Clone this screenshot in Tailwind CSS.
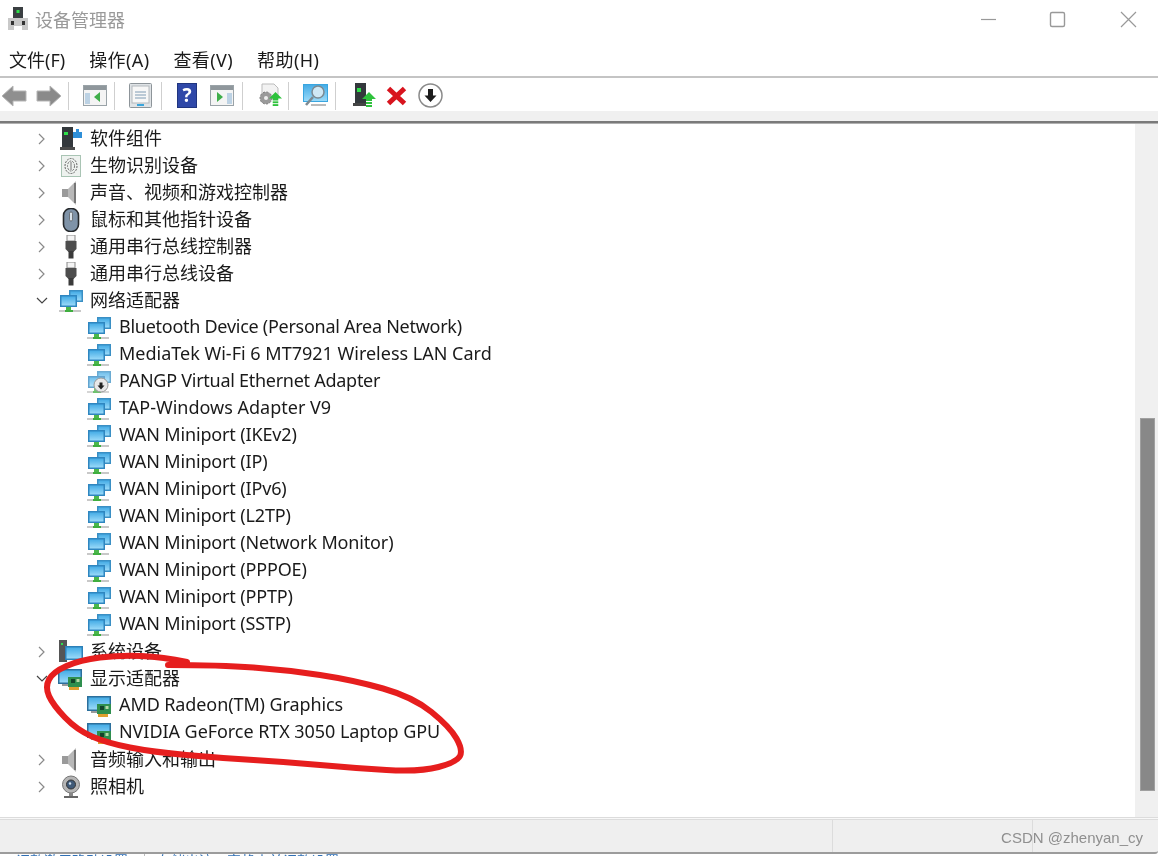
<!DOCTYPE html>
<html lang="zh-CN">
<head>
  <meta charset="UTF-8" />
  <title>设备管理器</title>
  <script src="https://cdn.jsdelivr.net/npm/@tailwindcss/browser@4"></script>
</head>
<body class="bg-white">
  <!-- icon set -->
  <svg class="absolute w-0 h-0">
    <defs>
      <linearGradient id="blue" x1="0" y1="0" x2="0" y2="1"><stop offset="0" stop-color="#45ace6"/><stop offset="1" stop-color="#9adaf9"/></linearGradient>
      <symbol id="net" viewBox="0 0 24 24">
        <rect x="10" y="1" width="14" height="12" fill="#3a8fc4"/><rect x="11.500" y="2.500" width="11" height="9" fill="url(#blue)"/>
        <rect x="1" y="6" width="17" height="12" fill="#2f86c0"/><rect x="2.500" y="7.500" width="14" height="9" fill="url(#blue)"/>
        <rect x="7" y="18" width="5" height="3" fill="#4cb84c"/><rect x="0" y="21" width="22" height="2" fill="#c8c8c8"/><rect x="6" y="21" width="8" height="2" fill="#3fae3f"/>
      </symbol>
      <symbol id="gpu" viewBox="0 0 24 24">
        <rect x="0" y="2" width="24" height="15" fill="#2c6f9c"/><rect x="1.5" y="3.5" width="21" height="12" fill="url(#blue)"/>
        <rect x="4" y="17" width="9" height="2" fill="#9a9a9a"/>
        <rect x="10" y="10" width="14" height="10" fill="#2f8f4e"/><rect x="13" y="12" width="4" height="4" fill="#14452a"/><rect x="18.5" y="12" width="3" height="3" fill="#b6d9a6"/>
        <rect x="11" y="20" width="10" height="3" fill="#e0a030"/>
      </symbol>
      <symbol id="tower" viewBox="0 0 24 24">
        <rect x="3" y="0" width="11" height="20" fill="#33383c"/><rect x="5" y="5" width="4" height="3" fill="#2ee04a"/>
        <rect x="1" y="20" width="15" height="3" fill="#4a4a4a"/>
      </symbol>
      <symbol id="speaker" viewBox="0 0 24 24">
        <path d="M3 8h6v8H3z" fill="#9a9a9a"/><path d="M9 8 17 0v24l-8-8z" fill="#b8b8b8"/><path d="M15 2h2v20h-2z" fill="#777"/>
      </symbol>
      <symbol id="usb" viewBox="0 0 24 24">
        <rect x="8" y="0" width="8" height="6" fill="#f4f4f4" stroke="#888"/><path d="M6.500 6h11v8l-3 3h-5l-3-3z" fill="#4d4d4d"/><rect x="9.500" y="16" width="5" height="7.500" fill="#3a3a3a"/>
      </symbol>
      <symbol id="arrowup" viewBox="0 0 14 16">
        <path d="M7 0 14 7H10V9H4V7H0z" fill="#2ec23c"/><rect x="4" y="10" width="6" height="2" fill="#2ec23c"/><rect x="4" y="13" width="6" height="2" fill="#2ec23c"/>
      </symbol>
    </defs>
  </svg>

  <div class="relative w-[1158px] h-[856px] overflow-hidden bg-white font-['Noto_Sans','Noto_Sans_CJK_SC',sans-serif] text-[18px] leading-[27px] text-[#1a1a1a] flex flex-col blur-[0.3px]">

    <!-- Title bar -->
    <header class="h-[44px] shrink-0 flex items-start">
      <svg class="w-[22px] h-[24px] ml-[7px] mt-[7px]" viewBox="0 0 22 24">
        <rect x="6" y="0" width="10" height="12" fill="#3a3f42"/><rect x="9.5" y="3" width="3" height="3" fill="#2ee04a"/>
        <path d="M1 11h20v12H1z" fill="#c9c9c9"/><rect x="4" y="14" width="3" height="4" fill="#333"/><rect x="15" y="14" width="3" height="4" fill="#333"/><rect x="7" y="19" width="8" height="4" fill="#fff"/>
      </svg>
      <h1 class="ml-[6px] mt-[7px] text-[#9a9a9a] text-[18px]">设备管理器</h1>
      <div class="ml-auto relative">
        <svg class="w-[178px] h-[44px] block" viewBox="0 0 178 44" fill="none" stroke="#999">
          <path d="M1 19.5h15" stroke-width="1.2"/>
          <rect x="70.5" y="12.5" width="14" height="14" rx="1.5" stroke-width="1.4"/>
          <path d="M141 12l15 15M156 12l-15 15" stroke-width="1.2"/>
        </svg>
      </div>
    </header>

    <!-- Menu bar -->
    <nav class="h-[32px] shrink-0 flex items-center pl-[9px] gap-[24px] border-b-2 border-[#c4c4c4] box-content">
      <span>文件(F)</span><span class="tracking-[0.4px]">操作(A)</span><span class="tracking-[0.4px]">查看(V)</span><span class="tracking-[0.4px]">帮助(H)</span>
    </nav>

    <!-- Toolbar -->
    <div class="h-[33px] shrink-0 flex items-center pl-[1px] pt-[2px]">
      <svg class="w-[26px] h-[22px]" viewBox="0 0 26 22"><path d="M1 11 12 1v5h13v10H12v5z" fill="#8f8f8f" stroke="#b5b5b5"/></svg>
      <svg class="w-[26px] h-[22px] ml-[9px]" viewBox="0 0 26 22"><path d="M25 11 14 1v5H1v10h13v5z" fill="#8a8a8a" stroke="#b5b5b5"/></svg>
      <div class="w-px h-[28px] bg-[#cfcfcf] ml-[6px]"></div>
      <svg class="w-[24px] h-[21px] ml-[14px]" viewBox="0 0 24 21"><rect x=".5" y=".5" width="23" height="20" fill="#f4f4f4" stroke="#9aa3a8"/><rect x="1" y="1" width="22" height="4" fill="#8f979c"/><rect x="2" y="8" width="5" height="11" fill="#bcd2e4"/><path d="M17 7v10l-6-5z" fill="#3fae4a"/></svg>
      <div class="w-px h-[28px] bg-[#cfcfcf] ml-[7px]"></div>
      <svg class="w-[23px] h-[25px] ml-[14px]" viewBox="0 0 23 25"><rect x=".5" y=".5" width="22" height="24" rx="1" fill="#dfe3e6" stroke="#8d9499"/><rect x="3" y="3" width="17" height="17" fill="#f7f7f7" stroke="#b4b9bd"/><path d="M6 9h11M6 12h11M6 15h11" stroke="#7f9bb4"/><rect x="8" y="21" width="7" height="2" fill="#3aa6dc"/></svg>
      <div class="w-px h-[28px] bg-[#cfcfcf] ml-[9px]"></div>
      <div class="w-[20px] h-[25px] ml-[15px] bg-[#2f48a8] border border-[#20357f] flex items-center justify-center text-white font-bold text-[19px] leading-none">?</div>
      <svg class="w-[24px] h-[21px] ml-[13px]" viewBox="0 0 24 21"><rect x=".5" y=".5" width="23" height="20" fill="#f4f4f4" stroke="#9aa3a8"/><rect x="1" y="1" width="22" height="4" fill="#8f979c"/><rect x="17" y="8" width="5" height="11" fill="#bcd2e4"/><path d="M7 7v10l6-5z" fill="#3fae4a"/></svg>
      <div class="w-px h-[28px] bg-[#cfcfcf] ml-[8px]"></div>
      <svg class="w-[25px] h-[25px] ml-[14px]" viewBox="0 0 25 25"><path d="M5 1h12l4 4v8H5z" fill="#f2f2f2" stroke="#bbb"/><circle cx="9" cy="15" r="6" fill="#9a9a9a" stroke="#777" stroke-dasharray="2 1.5"/><circle cx="9" cy="15" r="2" fill="#eee"/><g transform="translate(12 9)"><use href="#arrowup" width="13" height="15"/></g></svg>
      <div class="w-px h-[28px] bg-[#cfcfcf] ml-[6px]"></div>
      <svg class="w-[25px] h-[24px] ml-[14px]" viewBox="0 0 25 24"><rect x="0" y="0" width="25" height="18" fill="#3aa6e0"/><rect x="1" y="1" width="23" height="16" fill="url(#blue)"/><circle cx="15" cy="8" r="6" fill="#cfe8f5" stroke="#7c8a92" stroke-width="1.5"/><path d="M10 13 3 21" stroke="#7c8a92" stroke-width="2.5"/><rect x="8" y="20" width="15" height="2" fill="#bbb"/></svg>
      <div class="w-px h-[28px] bg-[#cfcfcf] ml-[7px]"></div>
      <svg class="w-[23px] h-[25px] ml-[17px]" viewBox="0 0 23 25"><rect x="2" y="0" width="11" height="20" fill="#33383c"/><rect x="4" y="5" width="4" height="4" fill="#2ee04a"/><rect x="0" y="20" width="13" height="3" fill="#444"/><g transform="translate(9 9)"><use href="#arrowup" width="14" height="16"/></g></svg>
      <svg class="w-[21px] h-[20px] ml-[10px]" viewBox="0 0 21 20"><path d="M2.5 2.5 18.5 17.5M18.5 2.5 2.5 17.5" stroke="#d8141e" stroke-width="5"/></svg>
      <svg class="w-[25px] h-[25px] ml-[11px]" viewBox="0 0 25 25"><circle cx="12.5" cy="12.5" r="11.5" fill="#fff" stroke="#8a8a8a" stroke-width="1.5"/><path d="M12.5 19 6.5 12.5h3.5V6h5v6.500h3.500z" fill="#1c1c1c"/></svg>
    </div>

    <div class="h-[10px] shrink-0 bg-[#f0f0f0]"></div>
    <div class="h-[3px] shrink-0 bg-[#7a7a7a] border-b border-[#b0b0b0]"></div>

    <!-- Tree + scrollbar -->
    <main class="flex-1 flex min-h-0">
      <div class="flex-1 pt-[1px] relative">
        <!-- category rows -->
        <div class="flex h-[27px] items-center"><svg class="w-[8px] h-[12px] ml-[38px]" viewBox="0 0 8 12" fill="none" stroke="#8a8a8a" stroke-width="1.2"><path d="M1 1l5 5-5 5"/></svg><svg class="w-[24px] h-[24px] ml-[13px]" viewBox="0 0 24 24"><use href="#tower"/><path d="M14 5h3V2h3v3h3v6h-9z" fill="#2e8fd8"/></svg><span class="ml-[7px]">软件组件</span></div>
        <div class="flex h-[27px] items-center"><svg class="w-[8px] h-[12px] ml-[38px]" viewBox="0 0 8 12" fill="none" stroke="#8a8a8a" stroke-width="1.2"><path d="M1 1l5 5-5 5"/></svg><svg class="w-[24px] h-[24px] ml-[13px]" viewBox="0 0 24 24" fill="none"><rect x="2.500" y="1.500" width="19" height="21" fill="#eef2ef" stroke="#a9c4b4"/><ellipse cx="12" cy="12" rx="6" ry="7.500" stroke="#666" stroke-dasharray="2 1"/><ellipse cx="12" cy="12" rx="3.500" ry="5" stroke="#777" stroke-dasharray="2 1"/><path d="M12 8v8" stroke="#777"/></svg><span class="ml-[7px]">生物识别设备</span></div>
        <div class="flex h-[27px] items-center"><svg class="w-[8px] h-[12px] ml-[38px]" viewBox="0 0 8 12" fill="none" stroke="#8a8a8a" stroke-width="1.2"><path d="M1 1l5 5-5 5"/></svg><svg class="w-[24px] h-[24px] ml-[13px]" viewBox="0 0 24 24"><use href="#speaker"/></svg><span class="ml-[7px]">声音、视频和游戏控制器</span></div>
        <div class="flex h-[27px] items-center"><svg class="w-[8px] h-[12px] ml-[38px]" viewBox="0 0 8 12" fill="none" stroke="#8a8a8a" stroke-width="1.2"><path d="M1 1l5 5-5 5"/></svg><svg class="w-[24px] h-[24px] ml-[13px]" viewBox="0 0 24 24"><rect x="4.500" y="0.500" width="15" height="23" rx="7" fill="#7f93a8" stroke="#26292c" stroke-width="1.600"/><rect x="10.500" y="4" width="3" height="9" rx="1.500" fill="#d9e2ea" stroke="#444" stroke-width=".6"/></svg><span class="ml-[7px]">鼠标和其他指针设备</span></div>
        <div class="flex h-[27px] items-center"><svg class="w-[8px] h-[12px] ml-[38px]" viewBox="0 0 8 12" fill="none" stroke="#8a8a8a" stroke-width="1.2"><path d="M1 1l5 5-5 5"/></svg><svg class="w-[24px] h-[24px] ml-[13px]" viewBox="0 0 24 24"><use href="#usb"/></svg><span class="ml-[7px]">通用串行总线控制器</span></div>
        <div class="flex h-[27px] items-center"><svg class="w-[8px] h-[12px] ml-[38px]" viewBox="0 0 8 12" fill="none" stroke="#8a8a8a" stroke-width="1.2"><path d="M1 1l5 5-5 5"/></svg><svg class="w-[24px] h-[24px] ml-[13px]" viewBox="0 0 24 24"><use href="#usb"/></svg><span class="ml-[7px]">通用串行总线设备</span></div>
        <div class="flex h-[27px] items-center"><svg class="w-[12px] h-[8px] ml-[36px]" viewBox="0 0 12 8" fill="none" stroke="#444" stroke-width="1.2"><path d="M1 1l5 5 5-5"/></svg><svg class="w-[24px] h-[24px] ml-[11px]" viewBox="0 0 24 24"><use href="#net"/></svg><span class="ml-[7px]">网络适配器</span></div>

        <!-- network adapters -->
        <div class="flex h-[27px] items-center pl-[87px]"><svg class="w-[24px] h-[24px]" viewBox="0 0 24 24"><use href="#net"/></svg><span class="ml-[8px] mb-[2px] tracking-[-0.27px]">Bluetooth Device (Personal Area Network)</span></div>
        <div class="flex h-[27px] items-center pl-[87px]"><svg class="w-[24px] h-[24px]" viewBox="0 0 24 24"><use href="#net"/></svg><span class="ml-[8px] mb-[2px]">MediaTek Wi-Fi 6 MT7921 Wireless LAN Card</span></div>
        <div class="flex h-[27px] items-center pl-[87px]"><svg class="w-[24px] h-[24px]" viewBox="0 0 24 24"><use href="#net" opacity=".75"/><circle cx="14" cy="15" r="7" fill="#e8e8e8" stroke="#999"/><path d="M14 19.500 10.500 15.500h2v-3h3v3h2z" fill="#222"/></svg><span class="ml-[8px] mb-[2px] tracking-[-0.27px]">PANGP Virtual Ethernet Adapter</span></div>
        <div class="flex h-[27px] items-center pl-[87px]"><svg class="w-[24px] h-[24px]" viewBox="0 0 24 24"><use href="#net"/></svg><span class="ml-[8px] mb-[2px]">TAP-Windows Adapter V9</span></div>
        <div class="flex h-[27px] items-center pl-[87px]"><svg class="w-[24px] h-[24px]" viewBox="0 0 24 24"><use href="#net"/></svg><span class="ml-[8px] mb-[2px] tracking-[-0.15px]">WAN Miniport (IKEv2)</span></div>
        <div class="flex h-[27px] items-center pl-[87px]"><svg class="w-[24px] h-[24px]" viewBox="0 0 24 24"><use href="#net"/></svg><span class="ml-[8px] mb-[2px] tracking-[-0.15px]">WAN Miniport (IP)</span></div>
        <div class="flex h-[27px] items-center pl-[87px]"><svg class="w-[24px] h-[24px]" viewBox="0 0 24 24"><use href="#net"/></svg><span class="ml-[8px] mb-[2px] tracking-[-0.15px]">WAN Miniport (IPv6)</span></div>
        <div class="flex h-[27px] items-center pl-[87px]"><svg class="w-[24px] h-[24px]" viewBox="0 0 24 24"><use href="#net"/></svg><span class="ml-[8px] mb-[2px] tracking-[-0.15px]">WAN Miniport (L2TP)</span></div>
        <div class="flex h-[27px] items-center pl-[87px]"><svg class="w-[24px] h-[24px]" viewBox="0 0 24 24"><use href="#net"/></svg><span class="ml-[8px] mb-[2px] tracking-[-0.15px]">WAN Miniport (Network Monitor)</span></div>
        <div class="flex h-[27px] items-center pl-[87px]"><svg class="w-[24px] h-[24px]" viewBox="0 0 24 24"><use href="#net"/></svg><span class="ml-[8px] mb-[2px] tracking-[-0.15px]">WAN Miniport (PPPOE)</span></div>
        <div class="flex h-[27px] items-center pl-[87px]"><svg class="w-[24px] h-[24px]" viewBox="0 0 24 24"><use href="#net"/></svg><span class="ml-[8px] mb-[2px] tracking-[-0.15px]">WAN Miniport (PPTP)</span></div>
        <div class="flex h-[27px] items-center pl-[87px]"><svg class="w-[24px] h-[24px]" viewBox="0 0 24 24"><use href="#net"/></svg><span class="ml-[8px] mb-[2px] tracking-[-0.15px]">WAN Miniport (SSTP)</span></div>

        <div class="flex h-[27px] items-center"><svg class="w-[8px] h-[12px] ml-[38px]" viewBox="0 0 8 12" fill="none" stroke="#8a8a8a" stroke-width="1.2"><path d="M1 1l5 5-5 5"/></svg><svg class="w-[24px] h-[24px] ml-[13px]" viewBox="0 0 24 24"><rect x="0" y="0" width="8" height="22" fill="#555"/><rect x="2" y="3" width="2" height="2" fill="#2ee04a"/><rect x="6" y="6" width="18" height="14" fill="#2c80b8"/><rect x="7.500" y="7.500" width="15" height="11" fill="url(#blue)"/></svg><span class="ml-[7px]">系统设备</span></div>
        <div class="flex h-[27px] items-center"><svg class="w-[12px] h-[8px] ml-[36px]" viewBox="0 0 12 8" fill="none" stroke="#444" stroke-width="1.2"><path d="M1 1l5 5 5-5"/></svg><svg class="w-[24px] h-[24px] ml-[10px]" viewBox="0 0 24 24"><use href="#gpu"/></svg><span class="ml-[8px]">显示适配器</span></div>
        <div class="flex h-[27px] items-center pl-[87px]"><svg class="w-[24px] h-[24px]" viewBox="0 0 24 24"><use href="#gpu"/></svg><span class="ml-[8px] mb-[2px] tracking-[-0.1px]">AMD Radeon(TM) Graphics</span></div>
        <div class="flex h-[27px] items-center pl-[87px]"><svg class="w-[24px] h-[24px]" viewBox="0 0 24 24"><use href="#gpu"/></svg><span class="ml-[8px] mb-[2px] tracking-[-0.06px]">NVIDIA GeForce RTX 3050 Laptop GPU</span></div>
        <div class="flex h-[27px] items-center"><svg class="w-[8px] h-[12px] ml-[38px]" viewBox="0 0 8 12" fill="none" stroke="#8a8a8a" stroke-width="1.2"><path d="M1 1l5 5-5 5"/></svg><svg class="w-[24px] h-[24px] ml-[13px]" viewBox="0 0 24 24"><use href="#speaker"/></svg><span class="ml-[7px]">音频输入和输出</span></div>
        <div class="flex h-[27px] items-center"><svg class="w-[8px] h-[12px] ml-[38px]" viewBox="0 0 8 12" fill="none" stroke="#8a8a8a" stroke-width="1.2"><path d="M1 1l5 5-5 5"/></svg><svg class="w-[24px] h-[24px] ml-[13px]" viewBox="0 0 24 24"><circle cx="12" cy="9.500" r="8.500" fill="#b5b5b5" stroke="#777"/><circle cx="12" cy="9.500" r="4.500" fill="#3f5a78" stroke="#333"/><circle cx="11" cy="8.500" r="1.200" fill="#cfe0f0"/><rect x="10" y="18" width="4" height="3" fill="#888"/><rect x="5" y="21" width="14" height="2" fill="#666"/></svg><span class="ml-[7px]">照相机</span></div>
      </div>

      <!-- scrollbar -->
      <aside class="w-[23px] shrink-0 bg-[#f0f0f0] pl-[5px] pr-[3px] pt-[294px]">
        <div class="h-[373px] bg-[#888888] border border-[#a0a0a0]"></div>
      </aside>
    </main>

    <!-- Status bar -->
    <footer class="h-[37px] shrink-0 flex flex-col">
      <div class="h-[3px] border-y border-[#dcdcdc] bg-[#f8f8f8]"></div>
      <div class="flex-1 bg-[#efefef] flex justify-end border-b-2 border-[#9c9c9c] rounded-br-[3px]">
        <div class="w-[200px] border-l border-[#dcdcdc]"></div>
        <div class="w-[126px] border-l border-[#dcdcdc]"></div>
      </div>
    </footer>

    <!-- sliver of the page behind the window -->
    <div class="h-[2px] shrink-0 overflow-hidden flex text-[14px] leading-[14px] text-[#2f6fb5] pl-[16px]">
      <span>调整激用确动设置</span>
      <span class="w-px h-[2px] bg-[#bbb] ml-[16px]"></span>
      <span class="ml-[12px]">存储出流三窗趋来并调整设置</span>
    </div>

    <!-- red marker annotation -->
    <svg class="absolute inset-0 w-[1158px] h-[856px] pointer-events-none" viewBox="0 0 1158 856" fill="none">
      <path d="M187 662 Q163 657 141.500 656 Q120 655 100 657.500 Q80 660 66.500 666 Q53 672 49 679.500 Q45 687 49 696 Q53 705 65 717.500 Q77 730 92 736.500 Q107 743 130 747.500 Q153 752 186.500 755 Q220 758 253.500 760 Q287 762 320 765 Q353 768 386.500 770 Q420 772 438.500 767 Q457 762 460 756 Q463 750 456.500 738.500 Q450 727 431.500 712 Q413 697 383 688.500 Q353 680 320 675 Q287 670 253.500 667.500 Q220 665 168 665" stroke="#e61e1e" stroke-width="6" stroke-linecap="round"/>
    </svg>

    <span class="absolute right-[15px] top-[828px] text-[15px] leading-[20px] text-[#8f8f8f] font-['Liberation_Sans',sans-serif]">CSDN @zhenyan_cy</span>
  </div>
</body>
</html>
